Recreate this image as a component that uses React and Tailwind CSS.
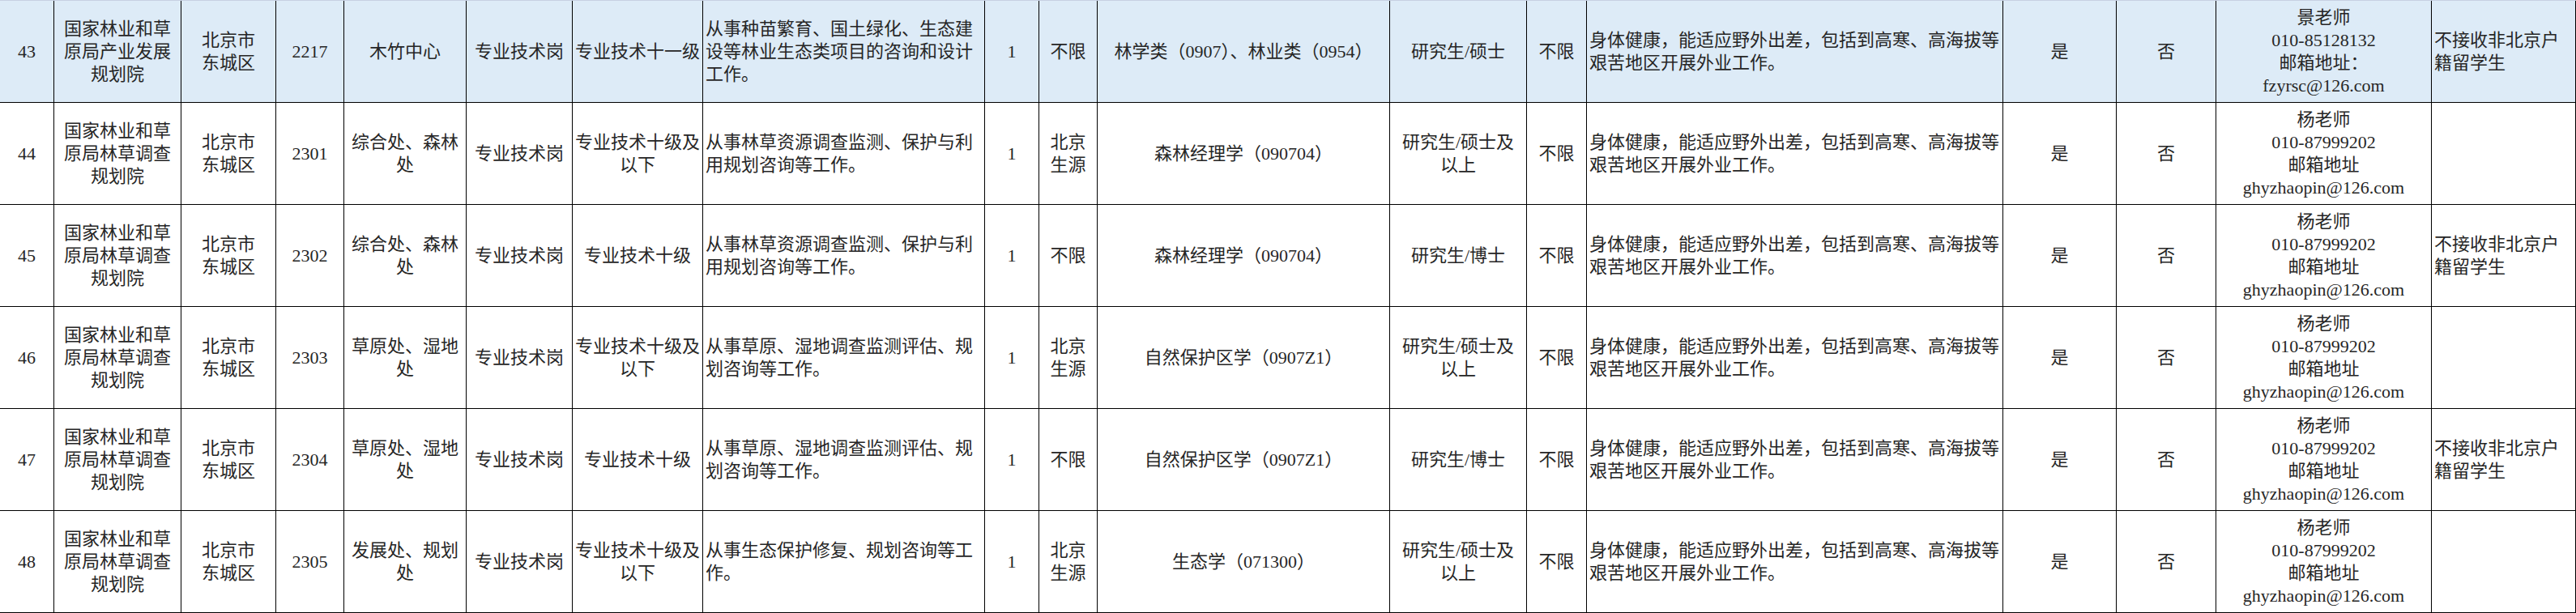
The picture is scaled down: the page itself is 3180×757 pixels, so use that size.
import React from 'react';

const unit1 = '国家林业和草\n原局产业发展\n规划院';
const unit2 = '国家林业和草\n原局林草调查\n规划院';
const city = '北京市\n东城区';
const health = '身体健康，能适应野外出差，包括到高寒、高海拔等\n艰苦地区开展外业工作。';
const contactYang = '杨老师\n010-87999202\n邮箱地址\nghyzhaopin@126.com';
const note = '不接收非北京户\n籍留学生';

const rows = [
  ['43', unit1, city, '2217', '木竹中心', '专业技术岗', '专业技术十一级', '从事种苗繁育、国土绿化、生态建\n设等林业生态类项目的咨询和设计\n工作。', '1', '不限', '林学类（0907）、林业类（0954）', '研究生/硕士', '不限', health, '是', '否', '景老师\n010-85128132\n邮箱地址：\nfzyrsc@126.com', note],
  ['44', unit2, city, '2301', '综合处、森林\n处', '专业技术岗', '专业技术十级及\n以下', '从事林草资源调查监测、保护与利\n用规划咨询等工作。', '1', '北京\n生源', '森林经理学（090704）', '研究生/硕士及\n以上', '不限', health, '是', '否', contactYang, ''],
  ['45', unit2, city, '2302', '综合处、森林\n处', '专业技术岗', '专业技术十级', '从事林草资源调查监测、保护与利\n用规划咨询等工作。', '1', '不限', '森林经理学（090704）', '研究生/博士', '不限', health, '是', '否', contactYang, note],
  ['46', unit2, city, '2303', '草原处、湿地\n处', '专业技术岗', '专业技术十级及\n以下', '从事草原、湿地调查监测评估、规\n划咨询等工作。', '1', '北京\n生源', '自然保护区学（0907Z1）', '研究生/硕士及\n以上', '不限', health, '是', '否', contactYang, ''],
  ['47', unit2, city, '2304', '草原处、湿地\n处', '专业技术岗', '专业技术十级', '从事草原、湿地调查监测评估、规\n划咨询等工作。', '1', '不限', '自然保护区学（0907Z1）', '研究生/博士', '不限', health, '是', '否', contactYang, note],
  ['48', unit2, city, '2305', '发展处、规划\n处', '专业技术岗', '专业技术十级及\n以下', '从事生态保护修复、规划咨询等工\n作。', '1', '北京\n生源', '生态学（071300）', '研究生/硕士及\n以上', '不限', health, '是', '否', contactYang, ''],
];

// columns whose text sits on the left
const leftCols = [7, 13, 17];

function App() {
  return (
    <div
      className="w-[3180px] h-[757px] overflow-hidden bg-white text-[#262626] text-[22px] leading-[28px] border-t border-[#c7d0e2]"
      style={{ fontFamily: '"Liberation Serif", "Noto Sans CJK SC", serif' }}
    >
      <div className="grid grid-cols-[67px_157px_117px_84px_151px_131px_161px_348px_67px_72px_361px_169px_74px_514px_140px_123px_266px_178px]">
        {rows.map((row, r) =>
          row.map((cell, c) => (
            <div
              key={r + '-' + c}
              className={`h-[126px] flex items-center whitespace-pre border-r-[1.5px] border-b-[1.5px] border-black ${
                r === 0 ? 'bg-[#ddebf7]' : 'bg-white'
              } ${leftCols.includes(c) ? 'justify-start text-left pl-[3px]' : 'justify-center text-center'}`}
            >
              {cell}
            </div>
          ))
        )}
      </div>
    </div>
  );
}

export default App;
